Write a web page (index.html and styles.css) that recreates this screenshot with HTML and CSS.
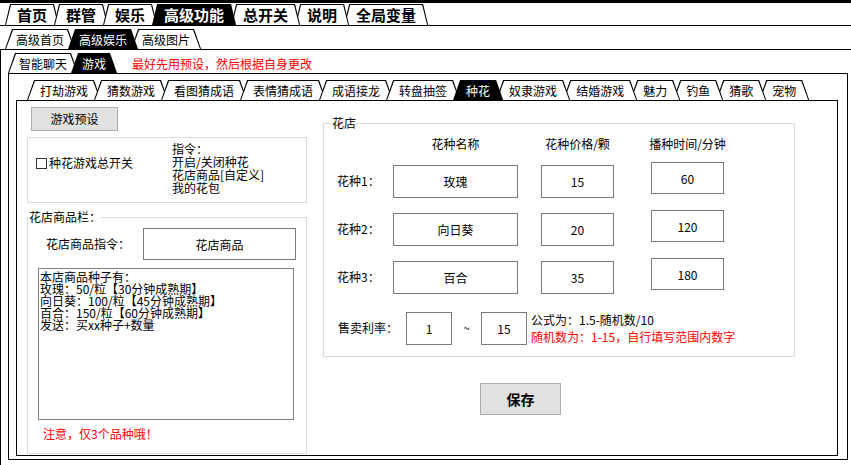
FILE: index.html
```html
<!DOCTYPE html>
<html>
<head>
    <meta charset="utf-8">
    <meta name="viewport" content="width=device-width, initial-scale=1">
    <link rel="stylesheet" href="styles.css">
</head>
<body>

<div class="topbar"></div>

<div class="tabs t1">
    <span class="tab">首页</span>
    <span class="tab">群管</span>
    <span class="tab">娱乐</span>
    <span class="tab on">高级功能</span>
    <span class="tab">总开关</span>
    <span class="tab">说明</span>
    <span class="tab">全局变量</span>
</div>

<div class="tabs t2">
    <span class="tab">高级首页</span>
    <span class="tab on">高级娱乐</span>
    <span class="tab">高级图片</span>
</div>

<div class="frame">
    <div class="tabs t3">
        <span class="tab">智能聊天</span>
        <span class="tab on">游戏</span>
        <span class="note">最好先用预设，然后根据自身更改</span>
    </div>

    <div class="panel">
        <div class="tabs t4">
            <span class="tab">打劫游戏</span>
            <span class="tab">猜数游戏</span>
            <span class="tab">看图猜成语</span>
            <span class="tab">表情猜成语</span>
            <span class="tab">成语接龙</span>
            <span class="tab">转盘抽签</span>
            <span class="tab on">种花</span>
            <span class="tab">奴隶游戏</span>
            <span class="tab">结婚游戏</span>
            <span class="tab">魅力</span>
            <span class="tab">钓鱼</span>
            <span class="tab">猜歌</span>
            <span class="tab">宠物</span>
        </div>

        <div class="inner">
            <!-- left column: switch + shop goods -->
            <div class="col">
                <button type="button" class="btn preset">游戏预设</button>

                <div class="group switch">
                    <label class="check"><span class="box"></span>种花游戏总开关</label>
                    <div class="cmds">指令：<br>开启/关闭种花<br>花店商品[自定义]<br>我的花包</div>
                </div>

                <fieldset class="group goods">
                    <legend>花店商品栏：</legend>
                    <div class="cmd-row">
                        <span class="lbl">花店商品指令：</span>
                        <input class="field" value="花店商品">
                    </div>
                    <textarea class="list">本店商品种子有：
玫瑰：50/粒【30分钟成熟期】
向日葵：100/粒【45分钟成熟期】
百合：150/粒【60分钟成熟期】
发送：买xx种子+数量</textarea>
                    <p class="warn">注意，仅3个品种哦！</p>
                </fieldset>
            </div>

            <!-- right column: flower shop -->
            <div class="col">
                <fieldset class="group shop">
                    <legend>花店</legend>
                    <div class="seeds">
                        <span></span>
                        <span class="head n">花种名称</span>
                        <span class="head p">花种价格/颗</span>
                        <span class="head t">播种时间/分钟</span>

                        <span class="lbl">花种1：</span>
                        <input class="field name" value="玫瑰">
                        <input class="field price" value="15">
                        <input class="field time" value="60">

                        <span class="lbl">花种2：</span>
                        <input class="field name" value="向日葵">
                        <input class="field price" value="20">
                        <input class="field time" value="120">

                        <span class="lbl">花种3：</span>
                        <input class="field name" value="百合">
                        <input class="field price" value="35">
                        <input class="field time" value="180">
                    </div>

                    <div class="rate">
                        <span class="lbl">售卖利率：</span>
                        <input class="field small" value="1">
                        <span class="tilde">~</span>
                        <input class="field small" value="15">
                        <div class="formula">
                            <div>公式为：1.5-随机数/10</div>
                            <div class="red">随机数为：1-15，自行填写范围内数字</div>
                        </div>
                    </div>
                </fieldset>

                <button type="button" class="btn save">保存</button>
            </div>
        </div>
    </div>
</div>

</body>
</html>
```

FILE: styles.css
```css
* {box-sizing: border-box;}

body {
    margin: 0;
    width: 851px;
    height: 465px;
    overflow: hidden;
    background: #fff;
    color: #000;
    font: 12px/1.2 "Noto Sans CJK SC", sans-serif;
}

.topbar {
    height: 3px;
    background: #000;
}

/* Tab strips - trapezoid tabs that overlap a little */
.tabs {
    display: flex;
    align-items: flex-end;
    --s: 7px;
}

.tab {
    position: relative;
    height: 20px;
    padding: 2px 13px 0;
    margin-left: calc(-1 * var(--s));
    display: flex;
    align-items: center;
    white-space: nowrap;
    background: #000;
    clip-path: polygon(0 100%, var(--s) 0, calc(100% - var(--s)) 0, 100% 100%);
}
.tab:first-child {
    margin-left: 0;
}
.tab::before {
    content: "";
    position: absolute;
    inset: 1px 1px 0;
    background: #fff;
    clip-path: polygon(0 100%, var(--s) 0, calc(100% - var(--s)) 0, 100% 100%);
    z-index: -1;
}

/* selected tab */
.tab.on {
    color: #fff;
    z-index: 20;
}
.tab.on::before {
    display: none;
}

/* tabs right of the selected one: earlier tab lies on top */
.tab.on ~ .tab {z-index: 9;}
.tab.on ~ .tab ~ .tab {z-index: 8;}
.tab.on ~ .tab ~ .tab ~ .tab {z-index: 7;}
.tab.on ~ .tab ~ .tab ~ .tab ~ .tab {z-index: 6;}
.tab.on ~ .tab ~ .tab ~ .tab ~ .tab ~ .tab {z-index: 5;}
.tab.on ~ .tab ~ .tab ~ .tab ~ .tab ~ .tab ~ .tab {z-index: 4;}

.t1 {
    --s: 5px;
    padding: 1px 0 0 5px;
    border-bottom: 1px solid #000;
}
.t1 .tab {
    height: 21px;
    padding: 1px 12px 0;
    font-size: 15px;
    font-weight: bold;
}

.t2 {
    padding: 3px 0 0 5px;
    border-bottom: 1px solid #000;
}
.t2 .tab {
    padding: 2px 11px 0;
}

.frame {
    height: 420px;
    border-left: 1px solid #000;
    padding-left: 7px;
}

.t3 {
    padding-top: 3px;
}
.t3 .tab {
    padding: 2px 11px 0;
}
.note {
    color: #f00;
    margin-left: 15px;
    align-self: center;
    padding-top: 2px;
}

.panel {
    width: 840px;
    height: 387px;
    border: 1px solid #000;
    padding-left: 7px;
}

.t4 {
    height: 26px;
    padding-left: 11px;
}

.inner {
    width: 822px;
    height: 356px;
    border: 1px solid #000;
    padding-left: 10px;
    display: grid;
    grid-template-columns: 280px 472px;
    column-gap: 16px;
    align-items: start;
}

/* Buttons */
.btn {
    display: block;
    padding: 0;
    font: inherit;
    color: #000;
    background: #e1e1e1;
    border: 1px solid #adadad;
}
.preset {
    width: 87px;
    height: 24px;
    margin: 6px 0 0 4px;
}
.save {
    width: 81px;
    height: 32px;
    margin: 26px 0 0 157px;
    font-size: 14px;
    font-weight: bold;
}

/* Group boxes */
.group {
    margin: 0;
    padding: 0;
    min-width: 0;
    border: 1px solid #dcdcdc;
}
.group legend {
    padding: 0;
    line-height: 12px;
}

.switch {
    height: 66px;
    margin-top: 6px;
    display: grid;
    grid-template-columns: 144px auto;
    align-items: start;
}
.check {
    display: flex;
    align-items: center;
    gap: 2px;
    margin: 18px 0 0 8px;
    line-height: 14px;
}
.box {
    width: 11px;
    height: 11px;
    border: 1px solid #333;
    background: #fff;
}
.cmds {
    margin-top: 4px;
    line-height: 13px;
}

.goods {
    margin-top: 8px;
    padding-bottom: 12px;
}
.goods legend {
    margin-left: 1px;
}
.cmd-row {
    display: flex;
    align-items: center;
    margin-top: 5px;
}
.cmd-row .lbl {
    width: 115px;
    padding-left: 18px;
}

/* Text inputs */
.field {
    padding: 0;
    font: inherit;
    color: #000;
    text-align: center;
    background: #fff;
    border: 1px solid #7a7a7a;
    outline: none;
}
.cmd-row .field {
    width: 153px;
    height: 32px;
}

.list {
    display: block;
    width: 256px;
    height: 152px;
    margin: 8px 0 0 10px;
    padding: 2px 1px;
    font: inherit;
    line-height: 12px;
    color: #000;
    border: 1px solid #808080;
    resize: none;
    overflow: hidden;
}

.warn {
    margin: 7px 0 0 15px;
    color: #f00;
    line-height: 14px;
}

/* Flower shop */
.shop {
    margin-top: 16px;
    padding-bottom: 11px;
}
.shop legend {
    margin-left: 8px;
}

.seeds {
    display: grid;
    grid-template-columns: 56px 148px 110px 73px;
    row-gap: 15px;
    margin: 8px 0 0 13px;
    align-items: start;
}
.seeds .lbl {
    align-self: center;
}
.head {
    display: flex;
    justify-content: center;
    line-height: 13px;
    white-space: nowrap;
}
.head.n {width: 125px;}
.head.p, .head.t {width: 73px;}

.name {
    width: 125px;
    height: 33px;
}
.price {
    width: 73px;
    height: 33px;
}
.time {
    width: 73px;
    height: 32px;
    margin-top: -3px;
}

.rate {
    display: flex;
    align-items: center;
    margin: 17px 0 0 14px;
}
.rate .lbl {
    width: 68px;
}
.small {
    width: 46px;
    height: 33px;
}
.tilde {
    width: 29px;
    text-align: center;
}
.formula {
    align-self: flex-start;
    margin-left: 4px;
    line-height: 17px;
    white-space: nowrap;
}
.formula .red {
    color: #f00;
}
```
